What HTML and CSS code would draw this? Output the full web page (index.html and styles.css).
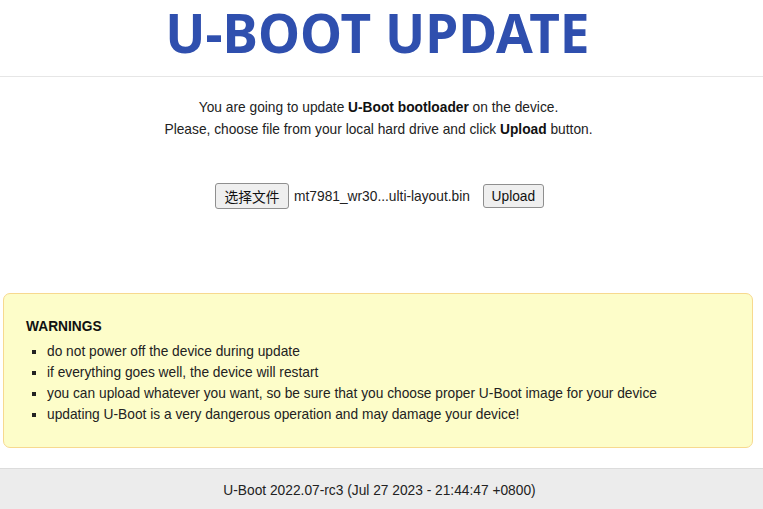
FILE: index.html
```html
<!DOCTYPE html>
<html>
<head>
<meta charset="utf-8">
<link rel="stylesheet" href="styles.css">
</head>
<body>
<header class="header">
  <h1 class="title">U-BOOT UPDATE</h1>
</header>
<main class="main">
  <p class="intro">You are going to update <b>U-Boot bootloader</b> on the device.<br>Please, choose file from your local hard drive and click <b>Upload</b> button.</p>
  <form class="upload">
    <button type="button" class="btn btn-file">选择文件</button>
    <span class="filename">mt7981_wr30...ulti-layout.bin</span>
    <button type="button" class="btn btn-upload">Upload</button>
  </form>
  <div class="warn">
    <strong class="warn-title">WARNINGS</strong>
    <ul class="warn-list">
      <li>do not power off the device during update</li>
      <li>if everything goes well, the device will restart</li>
      <li>you can upload whatever you want, so be sure that you choose proper U-Boot image for your device</li>
      <li>updating U-Boot is a very dangerous operation and may damage your device!</li>
    </ul>
  </div>
</main>
<footer class="footer">U-Boot 2022.07-rc3 (Jul 27 2023 - 21:44:47 +0800)</footer>
</body>
</html>
```
FILE: styles.css
```css
html, body {
  margin: 0;
  padding: 0;
  background: #fff;
}
body {
  font-family: "Liberation Sans", Arial, sans-serif;
  font-size: 13.75px;
  color: #222;
  width: 763px;
  height: 509px;
  display: flex;
  flex-direction: column;
  overflow: hidden;
}
.header {
  height: 76px;
  border-bottom: 1px solid #e6e6e6;
  display: flex;
  justify-content: center;
  align-items: flex-start;
}
.title {
  margin: 0;
  font-family: "Noto Sans", "Open Sans", sans-serif;
  font-weight: 700;
  font-size: 53.2px;
  line-height: 66px;
  color: #2f4fae;
  white-space: nowrap;
  padding-right: 8px;
}
.main {
  flex: 1;
  display: flex;
  flex-direction: column;
  align-items: center;
}
.intro {
  margin: 20px 0 0;
  padding-right: 6px;
  line-height: 22px;
  text-align: center;
  color: #222;
}
.intro b { color: #111; }
.upload {
  margin-top: 42px;
  display: flex;
  align-items: center;
  margin-right: 4px;
}
.btn {
  font-family: "Liberation Sans", "Noto Sans CJK SC", sans-serif;
  font-size: 13.75px;
  color: #111;
  background: #efefef;
  border: 1px solid #8f8f8f;
  border-radius: 3px;
  padding: 0;
}
.btn-file {
  height: 26px;
  font-family: "Noto Sans CJK SC", sans-serif;
  width: 74px;
}
.filename {
  margin-left: 5px;
  margin-right: 13px;
  color: #222;
}
.btn-upload {
  height: 24px;
  width: 61px;
}
.warn {
  align-self: flex-start;
  margin: 84px 0 0 3px;
  width: 750px;
  box-sizing: border-box;
  height: 155px;
  background: #fdfdc9;
  border: 1px solid #f7d98f;
  border-radius: 7px;
  padding: 24px 22px 0;
}
.warn-title {
  display: block;
  color: #111;
  line-height: 18px;
}
.warn-list {
  margin: 5px 0 0;
  padding-left: 21px;
  list-style: square;
  color: #222;
}
.warn-list li {
  line-height: 21px;
  height: 21px;
}
.warn-list li::marker { font-size: 13px; }
.footer {
  height: 41px;
  box-sizing: border-box;
  background: #ececec;
  border-top: 1px solid #dcdcdc;
  display: flex;
  align-items: center;
  justify-content: center;
  color: #222;
  padding-top: 2px;
  padding-right: 4px;
}
```
